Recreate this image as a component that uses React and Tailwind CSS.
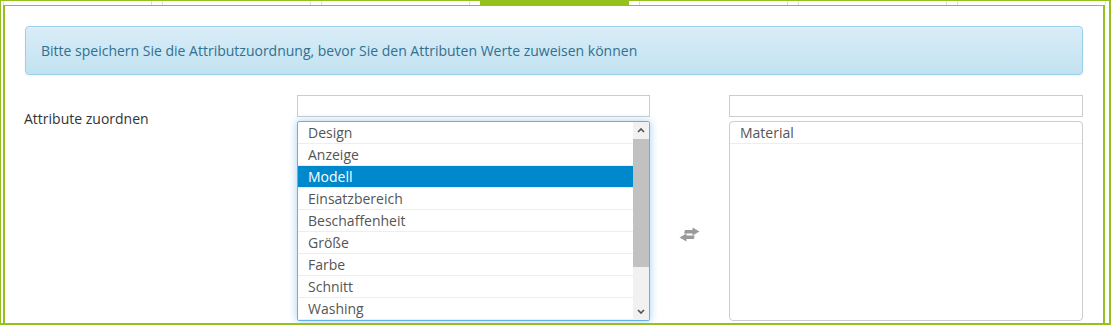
import React from 'react';

const GREEN = 'border-[#95c11f]';

const tabs = [0, 1, 2, 3, 4, 5, 6];
const activeTab = 3;

const available = [
  'Design',
  'Anzeige',
  'Modell',
  'Einsatzbereich',
  'Beschaffenheit',
  'Größe',
  'Farbe',
  'Schnitt',
  'Washing',
];
const selected = 'Modell';

// swap arrows between the two lists
function ExchangeIcon() {
  return (
    <svg viewBox="0 0 21 15" className="h-[15px] w-[21px]" fill="#9a9a9a">
      <path d="M6 3 H13.5 V0.5 L20.5 4.5 L13.5 8.5 V6.5 H5 Z" />
      <path d="M15.5 8.5 H7.5 V6.5 L0.5 10.5 L7.5 14.5 V12 H15 Z" />
    </svg>
  );
}

function Scrollbar() {
  return (
    <div className="flex w-[16px] shrink-0 flex-col bg-[#f1f1f1]">
      <div className="flex h-[17px] items-center justify-center">
        <svg viewBox="0 0 8 5" className="h-[5px] w-[8px]">
          <path d="M1 4 L4 1 L7 4" fill="none" stroke="#505050" strokeWidth="1.6" />
        </svg>
      </div>
      <div className="h-[128px] bg-[#c1c1c1]" />
      <div className="flex-1" />
      <div className="flex h-[17px] items-center justify-center">
        <svg viewBox="0 0 8 5" className="h-[5px] w-[8px]">
          <path d="M1 1 L4 4 L7 1" fill="none" stroke="#505050" strokeWidth="1.6" />
        </svg>
      </div>
    </div>
  );
}

function Row({ label, active }) {
  return (
    <div
      className={
        'h-[22px] border-b border-[#eeeeee] pl-[10px] text-[14px] leading-[21px] ' +
        (active ? 'bg-[#0088cc] text-white' : 'text-[#555555]')
      }
    >
      {label}
    </div>
  );
}

export default function App() {
  return (
    <div
      className={`h-[325px] w-[1111px] overflow-hidden border-t border-l border-r-2 border-b-2 ${GREEN} bg-white`}
      style={{ fontFamily: '"Open Sans", "Noto Sans", sans-serif' }}
    >
      {/* Tab strip */}
      <div className="ml-[2px] flex h-[4px] gap-[10px]">
        {tabs.map((t) => (
          <div
            key={t}
            className={
              'h-full w-[149px] ' +
              (t === activeTab ? 'bg-[#95c11f]' : 'border-x border-[#dddddd]')
            }
          />
        ))}
      </div>

      {/* Tab panel */}
      <div className={`ml-[2px] mr-[4px] h-full border-t border-x-2 ${GREEN} px-[20px] pt-[20px]`}>
        <div className="flex h-[49px] items-center rounded-[4px] border border-[#9acfea] bg-gradient-to-b from-[#d9edf7] to-[#c2e2f2] px-[15px] text-[14px] text-[#31708f] shadow-[inset_0_1px_0_rgba(255,255,255,0.25),0_1px_2px_rgba(0,0,0,0.05)]">
          Bitte speichern Sie die Attributzuordnung, bevor Sie den Attributen Werte zuweisen können
        </div>

        <div className="mt-[20px] grid grid-cols-[272px_353px_79px_354px]">
          <div className="-ml-px pt-[14px] text-[14px] leading-[20px] text-[#333333]">
            Attribute zuordnen
          </div>

          <div className="flex flex-col gap-[4px]">
            <div className="h-[22px] border border-[#cccccc] bg-white" />
            <div className="flex h-[200px] overflow-hidden rounded-[2px] border border-[#66afe9] bg-white shadow-[0_0_8px_rgba(102,175,233,0.6)]">
              <div className="flex-1">
                {available.map((a) => (
                  <Row key={a} label={a} active={a === selected} />
                ))}
              </div>
              <Scrollbar />
            </div>
          </div>

          <div className="flex justify-center pt-[132px]">
            <ExchangeIcon />
          </div>

          <div className="flex flex-col gap-[4px]">
            <div className="h-[22px] border border-[#cccccc] bg-white" />
            <div className="h-[200px] rounded-[4px] border border-[#cccccc] bg-white">
              <Row label="Material" />
            </div>
          </div>
        </div>
      </div>
    </div>
  );
}
